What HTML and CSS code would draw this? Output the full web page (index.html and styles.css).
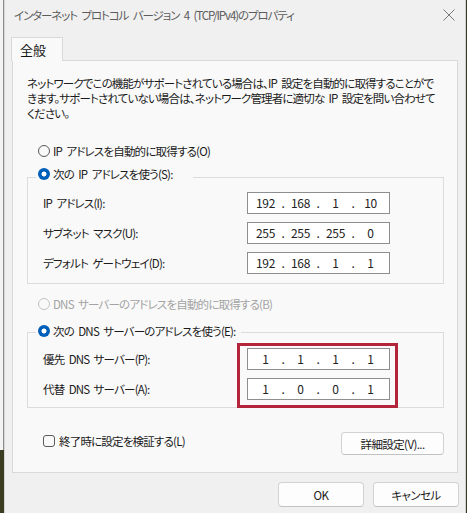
FILE: index.html
```html
<!DOCTYPE html>
<html lang="ja">
<head>
<meta charset="utf-8">
<link rel="stylesheet" href="styles.css">
</head>
<body>
<div class="screen">
  <div class="bgwin">
    <div class="bgwin-top"></div>
    <div class="bgwin-desk"></div>
  </div>
  <div class="dialog">
    <div class="titlebar">
      <span class="title">インターネット プロトコル バージョン 4 (TCP/IPv4)のプロパティ</span>
      <svg class="close" width="12" height="12" viewBox="0 0 12 12"><path d="M0.5 0.5 L11.5 11.5 M11.5 0.5 L0.5 11.5" stroke="#7a7a7a" stroke-width="1" fill="none"/></svg>
    </div>
    <div class="tabs"><div class="tab">全般</div></div>
    <div class="panel">
      <p class="desc">ネットワークでこの機能がサポートされている場合は、IP 設定を自動的に取得することがで<br>きます。サポートされていない場合は、ネットワーク管理者に適切な IP 設定を問い合わせて<br>ください。</p>

      <div class="option option-first"><span class="radio"></span><span>IP アドレスを自動的に取得する(O)</span></div>

      <div class="group group-ip">
        <div class="legend legend-ip"><span class="radio radio-on"></span><span>次の IP アドレスを使う(S):</span></div>
        <div class="fields">
          <div class="field"><span class="label">IP アドレス(I):</span><div class="ipbox"><span>192</span><span>.</span><span>168</span><span>.</span><span>1</span><span>.</span><span>10</span></div></div>
          <div class="field"><span class="label">サブネット マスク(U):</span><div class="ipbox"><span>255</span><span>.</span><span>255</span><span>.</span><span>255</span><span>.</span><span>0</span></div></div>
          <div class="field"><span class="label">デフォルト ゲートウェイ(D):</span><div class="ipbox"><span>192</span><span>.</span><span>168</span><span>.</span><span>1</span><span>.</span><span>1</span></div></div>
        </div>
      </div>

      <div class="option option-dns disabled"><span class="radio"></span><span>DNS サーバーのアドレスを自動的に取得する(B)</span></div>

      <div class="group group-dns">
        <div class="legend legend-dns"><span class="radio radio-on"></span><span>次の DNS サーバーのアドレスを使う(E):</span></div>
        <div class="fields fields-dns">
          <div class="field"><span class="label">優先 DNS サーバー(P):</span><div class="ipbox"><span>1</span><span>.</span><span>1</span><span>.</span><span>1</span><span>.</span><span>1</span></div></div>
          <div class="field"><span class="label">代替 DNS サーバー(A):</span><div class="ipbox"><span>1</span><span>.</span><span>0</span><span>.</span><span>0</span><span>.</span><span>1</span></div></div>
        </div>
        <div class="highlight"></div>
      </div>

      <div class="bottomrow">
        <div class="check"><span class="checkbox"></span><span>終了時に設定を検証する(L)</span></div>
        <button class="btn btn-adv">詳細設定(V)...</button>
      </div>
    </div>
    <div class="footer">
      <button class="btn btn-ok">OK</button>
      <button class="btn btn-cancel">キャンセル</button>
    </div>
  </div>
</div>
</body>
</html>
```

FILE: styles.css
```css
* { box-sizing: border-box; }
html, body { margin: 0; padding: 0; }
body {
  width: 467px;
  height: 513px;
  overflow: hidden;
  background: #3b3d2a;
  font-family: "Noto Sans CJK JP", "Noto Sans", sans-serif;
  font-feature-settings: "palt";
  font-size: 11.5px;
  letter-spacing: -0.8px;
  word-spacing: 2.5px;
  color: #1b1b1b;
}
.screen {
  display: flex;
  height: 513px;
}
.bgwin {
  width: 4px;
  display: flex;
  flex-direction: column;
}
.bgwin-top {
  height: 450px;
  background: #f4f4f4;
  border-right: 1px solid #8c8c8c;
}
.bgwin-desk {
  flex: 1;
  background: #3a3d22;
}
.dialog {
  width: 462px;
  height: 513px;
  background: #f0f0f0;
  border-left: 1px solid #d6d6d6;
  border-right: 1px solid #cfcfcf;
  padding: 0 7px;
  display: flex;
  flex-direction: column;
}
.titlebar {
  height: 29px;
  flex: none;
  display: flex;
  align-items: center;
  justify-content: space-between;
  padding: 0 2px 0 2px;
}
.title {
  color: #5c5c5c;
  font-size: 11.5px;
  letter-spacing: -1.1px;
  word-spacing: 3px;
  white-space: nowrap;
}
.close { margin-right: 1px; flex: none; }
.tabs {
  margin-top: 8px;
  display: flex;
  margin-left: -1px;
  flex: none;
}
.tab {
  position: relative;
  z-index: 1;
  width: 52px;
  height: 24px;
  background: #f9f9f9;
  border: 1px solid #d9d9d9;
  border-bottom: none;
  margin-bottom: -1px;
  padding: 4px 0 0 8px;
  font-size: 13px;
  letter-spacing: 0;
  line-height: 16px;
  color: #111;
}
.panel {
  flex: none;
  background: #f9f9f9;
  border: 1px solid #d9d9d9;
  padding: 15px 10px 17px 14px;
  display: flex;
  flex-direction: column;
}
.desc {
  margin: 0;
  line-height: 15px;
  white-space: nowrap;
  letter-spacing: -0.85px;
}
.option, .legend, .check {
  display: flex;
  align-items: center;
  height: 16px;
  line-height: 16px;
  gap: 3px;
  white-space: nowrap;
}
.option { padding-left: 11px; }
.option-first { margin-top: 22px; }
.option-dns { margin-top: 12px; }
.disabled { color: #a3a3a3; }
.radio {
  width: 12px;
  height: 12px;
  border-radius: 50%;
  border: 1px solid #5a5a5a;
  background: #f9f9f9;
  flex: none;
}
.disabled .radio { border-color: #c4c4c4; }
.radio-on {
  border: none;
  background: radial-gradient(circle, #ffffff 0 2.2px, #005fb8 2.8px);
}
.group {
  position: relative;
  border: 1px solid #dcdcdc;
  margin-right: 3px;
}
.group-ip { margin-top: 18px; padding-bottom: 9px; }
.group-dns { margin-top: 20px; padding-bottom: 7px; }
.legend {
  background: #f9f9f9;
  align-self: flex-start;
  width: max-content;
  margin-left: 8px;
  padding: 0 20px 0 2px;
}
.legend-ip { margin-top: -12px; }
.legend-dns { margin-top: -10px; padding-right: 6px; }
.fields {
  display: flex;
  flex-direction: column;
  gap: 8px;
  padding-left: 15px;
  margin-top: 10px;
}
.fields-dns { margin-top: 9px; }
.field {
  display: grid;
  grid-template-columns: 204px 143px;
  align-items: center;
}
.label { line-height: 16px; white-space: nowrap; }
.ipbox {
  height: 22px;
  background: #ffffff;
  border: 1px solid #8e8e8e;
  display: grid;
  grid-template-columns: 27px 8px 27px 8px 27px 8px 27px;
  padding-left: 4px;
  align-items: center;
  text-align: center;
  font-size: 12px;
  letter-spacing: -0.4px;
  line-height: 20px;
  color: #222;
}
.highlight {
  position: absolute;
  left: 209px;
  top: 10px;
  width: 161px;
  height: 65px;
  border: 3px solid #b3253a;
}
.bottomrow {
  margin-top: 24px;
  display: flex;
  justify-content: space-between;
  align-items: flex-start;
  padding-left: 16px;
  margin-right: 3px;
}
.check { margin-top: 1px; gap: 4px; }
.checkbox {
  width: 12px;
  height: 12px;
  border: 1px solid #5a5a5a;
  border-radius: 3px;
  background: #f9f9f9;
}
.btn {
  font-family: inherit;
  font-feature-settings: "palt";
  font-size: 11.5px;
  letter-spacing: -0.6px;
  color: #1b1b1b;
  background: #fdfdfd;
  border: 1px solid #d2d2d2;
  border-bottom-color: #c2c2c2;
  border-radius: 4px;
  height: 23px;
  padding: 0;
  line-height: 20px;
}
.btn-adv { width: 103px; }
.footer {
  flex: none;
  margin-top: 9px;
  display: flex;
  justify-content: flex-end;
  gap: 9px;
  margin-right: -1px;
}
.btn-ok { width: 86px; height: 25px; }
.btn-cancel { width: 86px; height: 25px; }
```
